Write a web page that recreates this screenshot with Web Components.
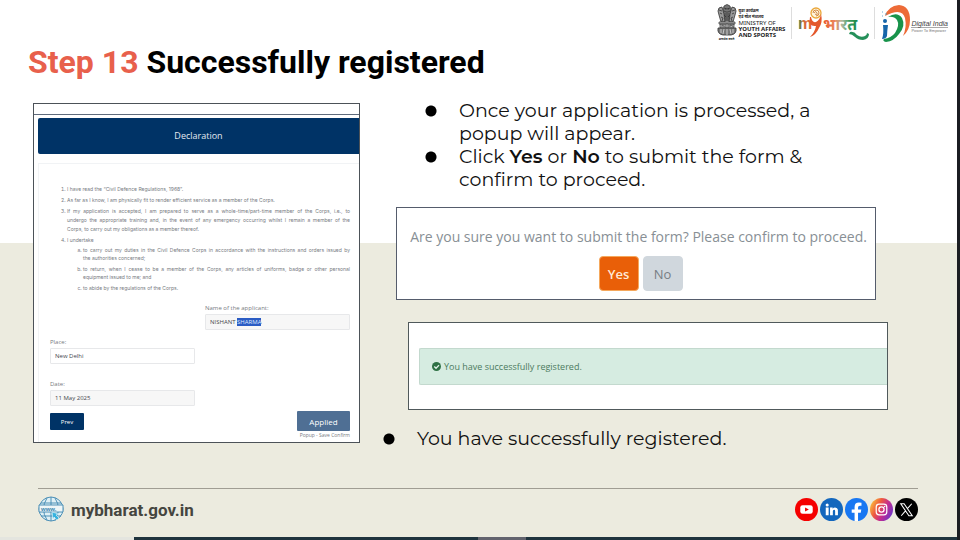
<!DOCTYPE html>
<html lang="en">
<head>
<meta charset="utf-8">
<meta name="viewport" content="width=device-width, initial-scale=1">
<title>Step 13 Successfully registered</title>
<style>
  body { margin: 0; font-family: Roboto, "Liberation Sans", sans-serif; color: #000; }
  bullet-list b { font-family: "Montserrat", "Inter", sans-serif; font-weight: 600; }
</style>
</head>
<body>
<slide-page>
  <slide-header slot="header"><span slot="step">Step 13</span> Successfully registered</slide-header>
  <declaration-form slot="left"></declaration-form>
  <bullet-list slot="right" class="intro">
    <li>Once your application is processed, a popup will appear.</li>
    <li>Click <b>Yes</b> or <b>No</b> to submit the form &amp; confirm to proceed.</li>
  </bullet-list>
  <confirm-box slot="right">Are you sure you want to submit the form? Please confirm to proceed.</confirm-box>
  <success-box slot="right">You have successfully registered.</success-box>
  <bullet-list slot="right" class="outro">
    <li>You have successfully registered.</li>
  </bullet-list>
  <slide-footer slot="footer"></slide-footer>
</slide-page>

<script>
(function() {
  'use strict';

  // every element only differs in its markup, so share the boring part
  function define(name, html, setup) {
    customElements.define(name, class extends HTMLElement {
      constructor() {
        super();
        this.attachShadow({mode: 'open'});
        this.shadowRoot.innerHTML = html;
      }
      connectedCallback() {
        if (setup) setup(this.shadowRoot, this);
      }
    });
  }

  define('slide-page', `
    <style>
    :host { display: flex; flex-direction: column; min-height: 100vh; box-sizing: border-box; border-right: 3px solid #1b1d22; background: linear-gradient(#fff 45%, #ecebdf 45%); }
    main { display: grid; grid-template-columns: 327fr 507fr; gap: 21px; align-items: start; padding: 15px 69px 16px 33px; }
    .left { padding-top: 4px; }
    ::slotted(.intro) { padding: 0 60px 16px 44px; }
    ::slotted(.outro) { padding: 17px 0 0 2px; }
    ::slotted(confirm-box) { margin: 0 12px 22px 15px; }
    ::slotted(success-box) { margin-left: 27px; }
    .bar { display: flex; height: 3px; background: #20343e; }
    .bar i { flex: 0 0 14%; background: #e4e5df; }
    .bar b { flex: 0 0 5%; margin-left: 36%; background: #62636d; }
    </style>
    <slot name="header"></slot>
    <main>
      <div class="left"><slot name="left"></slot></div>
      <div><slot name="right"></slot></div>
    </main>
    <slot name="footer"></slot>
    <div class="bar"><i></i><b></b></div>
  `);

  define('slide-header', `
    <style>
    :host { display: flex; justify-content: space-between; align-items: flex-start; padding: 4px 9px 0 28px; }
    h1 { margin: 37px 0 1px; font-size: 32px; line-height: 42px; font-weight: 700; white-space: nowrap; }
    ::slotted([slot=step]) { color: #e8604c; }
    div { display: flex; align-items: center; gap: 5px; }
    hr { width: 1px; height: 32px; margin: 0; border: 0; background: #ddd; }
    </style>
    <h1><slot name="step"></slot> <slot></slot></h1>
    <div><ministry-logo></ministry-logo><hr><bharat-logo></bharat-logo><hr><digital-logo></digital-logo></div>
  `);

  define('ministry-logo', `
    <style>
    :host { display: flex; gap: 2px; margin-right: 1px; font: 6px/6px "Noto Sans", "Open Sans", sans-serif; color: #222; }
    .emblem { display: flex; flex-direction: column; align-items: center; }
    svg { display: block; width: 20px; height: 32px; }
    small { font-size: 3px; line-height: 6px; font-weight: 700; }
    p { margin: 4px 0 0; white-space: nowrap; }
    p span, b { display: block; }
    .hi { font-size: 4px; font-weight: 700; }
    </style>
    <div class="emblem">
      <svg viewBox="0 0 20 32" fill="none" stroke="#333">
        <path d="M7 2q3-3 6 0l1 4-1 4 1 7H6l1-7-1-4z" fill="#777" stroke-width=".7"/>
        <path d="M5 3Q1 3 1 7l1 4 2 7h4l-1-8zM15 3q4 0 4 4l-1 4-2 7h-4l1-8z" fill="#999" stroke-width=".8"/>
        <path d="M7 4q3 2 6 0M7 7l2 1h2l2-1M8 5h1M11 5h1M9 9v7M11 9v7M7 11l2 2M13 11l-2 2M2 6l3 1M18 6l-3 1M3 9l2 1M17 9l-2 1M4 13l2 1M16 13l-2 1M5 17l1-3M15 17l-1-3" stroke-width=".8"/>
        <path d="M2 18h16v2H2zM3 20h14v4H3z" fill="#bbb" stroke-width=".7"/>
        <circle cx="10" cy="22" r="2" stroke-width=".6" fill="#fff"/>
        <path d="M10 20v4M8 22h4M5 23v-2l2 1v1M13 23v-2l3 1v1" stroke-width=".6"/>
        <path d="M1 24h18q1 6-5 7H6q-6-1-5-7z" fill="#777" stroke-width=".8"/>
        <path d="M4 25v4M7 25l-1 5M10 25v6M13 25l1 5M16 25v4" stroke="#ddd" stroke-width=".8"/>
      </svg>
      <small>सत्यमेव जयते</small>
    </div>
    <p><span class="hi">युवा कार्यक्रम</span><span class="hi">एवं खेल मंत्रालय</span><span>MINISTRY OF</span><b>YOUTH AFFAIRS</b><b>AND SPORTS</b></p>
  `);

  define('bharat-logo', `
    <style>
    :host { display: block; }
    svg { display: block; width: 72px; height: 38px; }
    text { font-family: "Liberation Sans", "Noto Sans", sans-serif; font-weight: 700; }
    </style>
    <svg viewBox="0 0 72 38" role="img" aria-label="my भारत">
      <defs>
        <linearGradient id="m"><stop offset="0" stop-color="#27834a"/><stop offset=".4" stop-color="#d2693c"/><stop offset="1" stop-color="#e6662b"/></linearGradient>
        <linearGradient id="b"><stop offset="0" stop-color="#e85328"/><stop offset=".35" stop-color="#eb8a61"/><stop offset=".55" stop-color="#a9b9a0"/><stop offset=".75" stop-color="#3c9a5b"/><stop offset="1" stop-color="#178546"/></linearGradient>
      </defs>
      <text x="1" y="25" font-size="16" fill="url(#m)">m</text>
      <circle cx="19" cy="9" r="5" fill="#fff5dc" stroke="#eaa73a" stroke-width="1.3"/>
      <path d="M16 9a3 3 0 1 1 3 3M17 9q2-3 3 0t-2 1" fill="none" stroke="#c8742b" stroke-width=".8"/>
      <path d="M14 13q1 6 5 5 4-2 5-8 2 8-2 14-3 7-9 9 5-5 6-11-8 1-6-9z" fill="#e4572b"/>
      <text x="26" y="26" font-size="16" fill="url(#b)">भारत</text>
      <path d="M53 28q4-1 7 3 4 3 8 1 2-1 2-3l2 1q0 5-6 6-5 0-8-3-3-3-6-3z" fill="#25905a"/>
    </svg>
  `);

  define('digital-logo', `
    <style>
    :host { display: flex; align-items: center; color: #444; font-family: "Liberation Sans", sans-serif; }
    svg { display: block; width: 31px; height: 38px; }
    p { margin: 6px 0 0; white-space: nowrap; font-size: 7px; line-height: 7px; }
    i { display: block; border-bottom: 1px solid #aaa; }
    small { display: block; font-size: 4px; line-height: 5px; color: #777; }
    </style>
    <svg viewBox="0 0 31 38">
      <path d="M5 12Q8 2 19 1q11 1 11 15 0 10-7 16 4-9 2-18Q22 3 5 12z" fill="#ed6b37"/>
      <path d="M8 13Q17 7 22 14q4 8-3 16-5 7-13 8-4-1-2-3 7-1 11-6 5-8 2-13-3-4-9-3z" fill="#18934b"/>
      <circle cx="5" cy="17" r="2" fill="#1666aa"/>
      <path d="M3 21h5q-1 7-1 11-1 3-5 3 2-5 1-14z" fill="#1666aa"/>
      <path d="M2 12h1M5 10h2M2 8h1" stroke="#4498c7" stroke-width=".8"/>
    </svg>
    <p><i>Digital India</i><small>Power To Empower</small></p>
  `);

  define('bullet-list', `
    <style>
    :host { display: block; font: 19px/23px Montserrat, Inter, "Open Sans", sans-serif; color: #111; }
    ul { margin: 0; padding: 0; list-style: none; }
    ::slotted(li) { display: block; padding-left: 34px; background: radial-gradient(circle at 6px 12px, #000 5px, transparent 6px); }
    </style>
    <ul><slot></slot></ul>
  `);

  define('declaration-form', `
    <style>
    :host { display: block; border: 1px solid #4c5258; background: #fff; font: 5px/8px "Open Sans", "Noto Sans", sans-serif; color: #777b7f; }
    .top { height: 10px; border-bottom: 1px solid #5f6b7c; }
    h2 { margin: 3px 0 9px 4px; border-radius: 2px 0 0 2px; background: #003366; color: #e3e9f0; font-size: 9px; line-height: 36px; font-weight: 400; text-align: center; }
    form { margin-left: 4px; border: solid #f1f3f5; border-width: 1px 0 0 1px; padding: 21px 9px 3px 11px; }
    ol { margin: 0; padding: 0 0 0 17px; font-family: Inter, "Open Sans", sans-serif; line-height: 9px; }
    li + li { margin-top: 2px; }
    li span { display: block; text-align: justify; text-align-last: justify; }
    ol ol { list-style: lower-alpha; padding-top: 1px; padding-left: 16px; line-height: 8px; }
    ol ol li + li { margin-top: 3px; }
    .fields { display: grid; grid-template-columns: 1fr 1fr; gap: 8px 10px; margin: 12px 0 7px; }
    .fields p { margin: 0; display: flex; flex-direction: column; gap: 2px; grid-column: 1; }
    .fields .name { grid-column: 2; }
    .fields .date { margin-top: 8px; }
    label, input { font-size: 6px; }
    label { line-height: 8px; }
    input { box-sizing: border-box; width: 100%; height: 16px; margin: 0; padding: 0 4px; border: 1px solid #e7e8ea; border-radius: 1px; outline: 0; background: #fff; color: #45484c; font-family: inherit; }
    input[readonly] { background: #f7f7f7; }
    input::selection { background: #2b5cc4; color: #dce8ff; }
    .actions { display: flex; justify-content: space-between; align-items: flex-start; }
    .actions div { margin-top: -2px; text-align: right; }
    button { display: block; border: 0; border-radius: 1px; padding: 0; color: #fff; font-family: inherit; }
    .prev { width: 34px; height: 17px; background: #003366; font-size: 6px; }
    .apply { width: 53px; height: 20px; margin-left: auto; background: #4f6f94; font-size: 8px; }
    </style>
    <div class="top"></div>
    <h2>Declaration</h2>
    <form>
      <ol>
        <li>I have read the “Civil Defence Regulations, 1968”.</li>
        <li>As far as I know, I am physically fit to render efficient service as a member of the Corps.</li>
        <li><span>If my application is accepted, I am prepared to serve as a whole-time/part-time member of the Corps, i.e., to</span> <span>undergo the appropriate training and, in the event of any emergency occurring whilst I remain a member of the</span> Corps, to carry out my obligations as a member thereof.</li>
        <li>I undertake
          <ol>
            <li><span>to carry out my duties in the Civil Defence Corps in accordance with the instructions and orders issued by</span> the authorities concerned;</li>
            <li><span>to return, when I cease to be a member of the Corps, any articles of uniforms, badge or other personal</span> equipment issued to me; and</li>
            <li>to abide by the regulations of the Corps.</li>
          </ol>
        </li>
      </ol>
      <div class="fields">
        <p class="name"><label for="name">Name of the applicant:</label><input id="name" value="NISHANT SHARMA" readonly></p>
        <p><label for="place">Place:</label><input id="place" value="New Delhi"></p>
        <p class="date"><label for="date">Date:</label><input id="date" value="11 May 2025" readonly></p>
      </div>
      <div class="actions">
        <button type="button" class="prev">Prev</button>
        <div><button type="button" class="apply">Applied</button>Popup - Save Confirm</div>
      </div>
    </form>
  `, function(root) {
    // the surname starts out selected
    const name = root.querySelector('#name');
    name.focus();
    name.setSelectionRange(8, 14);
  });

  define('confirm-box', `
    <style>
    :host { display: block; border: 1px solid #555c6c; background: #fff; padding: 18px 0 8px 5px; text-align: center; font: 14px/22px "Open Sans", "Noto Sans", sans-serif; color: #888f95; }
    p { margin: 0; white-space: nowrap; }
    div { display: flex; justify-content: center; gap: 4px; margin-top: 8px; padding-left: 4px; }
    button { height: 35px; width: 40px; padding: 0; border: 1px solid #d0d7dd; border-radius: 4px; background: #d0d7dd; color: #777e84; font: 13px "Open Sans", "Noto Sans", sans-serif; }
    .yes { background: #e95f08; border-color: #f5a85c; color: #ffe9d6; font-weight: 600; }
    </style>
    <p><slot></slot></p>
    <div><button type="button" class="yes">Yes</button><button type="button">No</button></div>
  `);

  define('success-box', `
    <style>
    :host { display: block; border: 1px solid #50595b; background: #fff; padding: 25px 0 24px 10px; }
    div { display: flex; align-items: center; gap: 3px; padding: 0 12px; border: 1px solid #c3d9ce; border-right: 0; border-radius: 2px 0 0 2px; background: #d6ece1; color: #4c7b60; font: 9px/35px "Open Sans", "Noto Sans", sans-serif; }
    svg { width: 9px; height: 9px; }
    </style>
    <div role="status">
      <svg viewBox="0 0 10 10"><circle cx="5" cy="5" r="5" fill="#2f7145"/><path d="M2.5 5l2 2 3.300-3.500" fill="none" stroke="#e2f3ea" stroke-width="1.500"/></svg>
      <span><slot></slot></span>
    </div>
  `);

  define('slide-footer', `
    <style>
    :host { display: block; margin-top: auto; padding: 0 39px 15px 38px; }
    footer { display: flex; justify-content: space-between; align-items: center; border-top: 1px solid #a09d93; padding-top: 7px; }
    a { display: flex; align-items: center; gap: 7px; color: #454540; font-size: 17px; line-height: 26px; font-weight: 700; text-decoration: none; }
    nav { display: flex; gap: 2px; }
    svg { display: block; width: 23px; height: 23px; }
    .globe { width: 26px; height: 26px; }
    .globe + span { padding-top: 3px; line-height: 23px; }
    text { font: 700 6px "Liberation Sans", sans-serif; }
    </style>
    <footer>
      <a href="https://mybharat.gov.in">
        <svg class="globe" viewBox="0 0 26 26" fill="none" stroke="#3d86b0" stroke-width=".9">
          <circle cx="13" cy="13" r="12" fill="#dff0f5"/>
          <path d="M13 1v24M3 7h20M3 20h20M9 2q-7 11 0 22M17 2q7 11 0 22"/>
          <path d="M1 9h24v7H1z" fill="#eef6f7"/>
          <text x="3" y="15" fill="#3d86b0" stroke="none">www.</text>
          <path d="M14 16l7 2-3 1 3 3-2 2-3-3-1 3z" fill="#36b3df" stroke="#fff" stroke-width=".5"/>
        </svg>
        <span>mybharat.gov.in</span>
      </a>
      <nav>
        <a href="#youtube" aria-label="YouTube"><svg viewBox="0 0 24 24"><circle cx="12" cy="12" r="12" fill="#f50000"/><rect x="5.500" y="7.500" width="13" height="9" rx="2.500" fill="#fff"/><path d="M10.500 10v4l4-2z" fill="#f50000"/></svg></a>
        <a href="#linkedin" aria-label="LinkedIn"><svg viewBox="0 0 24 24"><circle cx="12" cy="12" r="12" fill="#1467bd"/><path d="M6 10h3v8H6zM10.500 10h2.700v1.200q1-1.400 2.600-1.400 2.900 0 2.900 3.400V18h-2.900v-4.300q0-1.500-1.100-1.500-1.300 0-1.300 1.600V18h-2.900z" fill="#fff"/><circle cx="7.500" cy="7.300" r="1.600" fill="#fff"/></svg></a>
        <a href="#facebook" aria-label="Facebook"><svg viewBox="0 0 24 24"><circle cx="12" cy="12" r="12" fill="#1877f2"/><path d="M10 24v-8.500H7V12h3V9.400q0-4.600 4.600-4.600l2.600.2v3h-1.600q-2 0-2 1.900V12h3.400l-.6 3.500h-2.800V24z" fill="#fff"/></svg></a>
        <a href="#instagram" aria-label="Instagram"><svg viewBox="0 0 24 24">
          <linearGradient id="g" x1="0" y1=".2" x2="1" y2=".7"><stop offset="0" stop-color="#fbc53c"/><stop offset=".35" stop-color="#ee593f"/><stop offset=".65" stop-color="#c32b91"/><stop offset="1" stop-color="#6a35c9"/></linearGradient>
          <circle cx="12" cy="12" r="12" fill="url(#g)"/><rect x="6.500" y="6.500" width="11" height="11" rx="3" fill="none" stroke="#fff" stroke-width="1.300"/><circle cx="12" cy="12" r="2.700" fill="none" stroke="#fff" stroke-width="1.300"/><circle cx="15.300" cy="8.800" r=".8" fill="#fff"/></svg></a>
        <a href="#x" aria-label="X"><svg viewBox="0 0 24 24"><circle cx="12" cy="12" r="12" fill="#000"/><path d="M6 6h3.500L18 18.500h-3.500zM17.500 6l-4.800 5.400M11.200 13.200L6.500 18.500" fill="none" stroke="#fff" stroke-width="1.100"/></svg></a>
      </nav>
    </footer>
  `);
}());
</script>
</body>
</html>
